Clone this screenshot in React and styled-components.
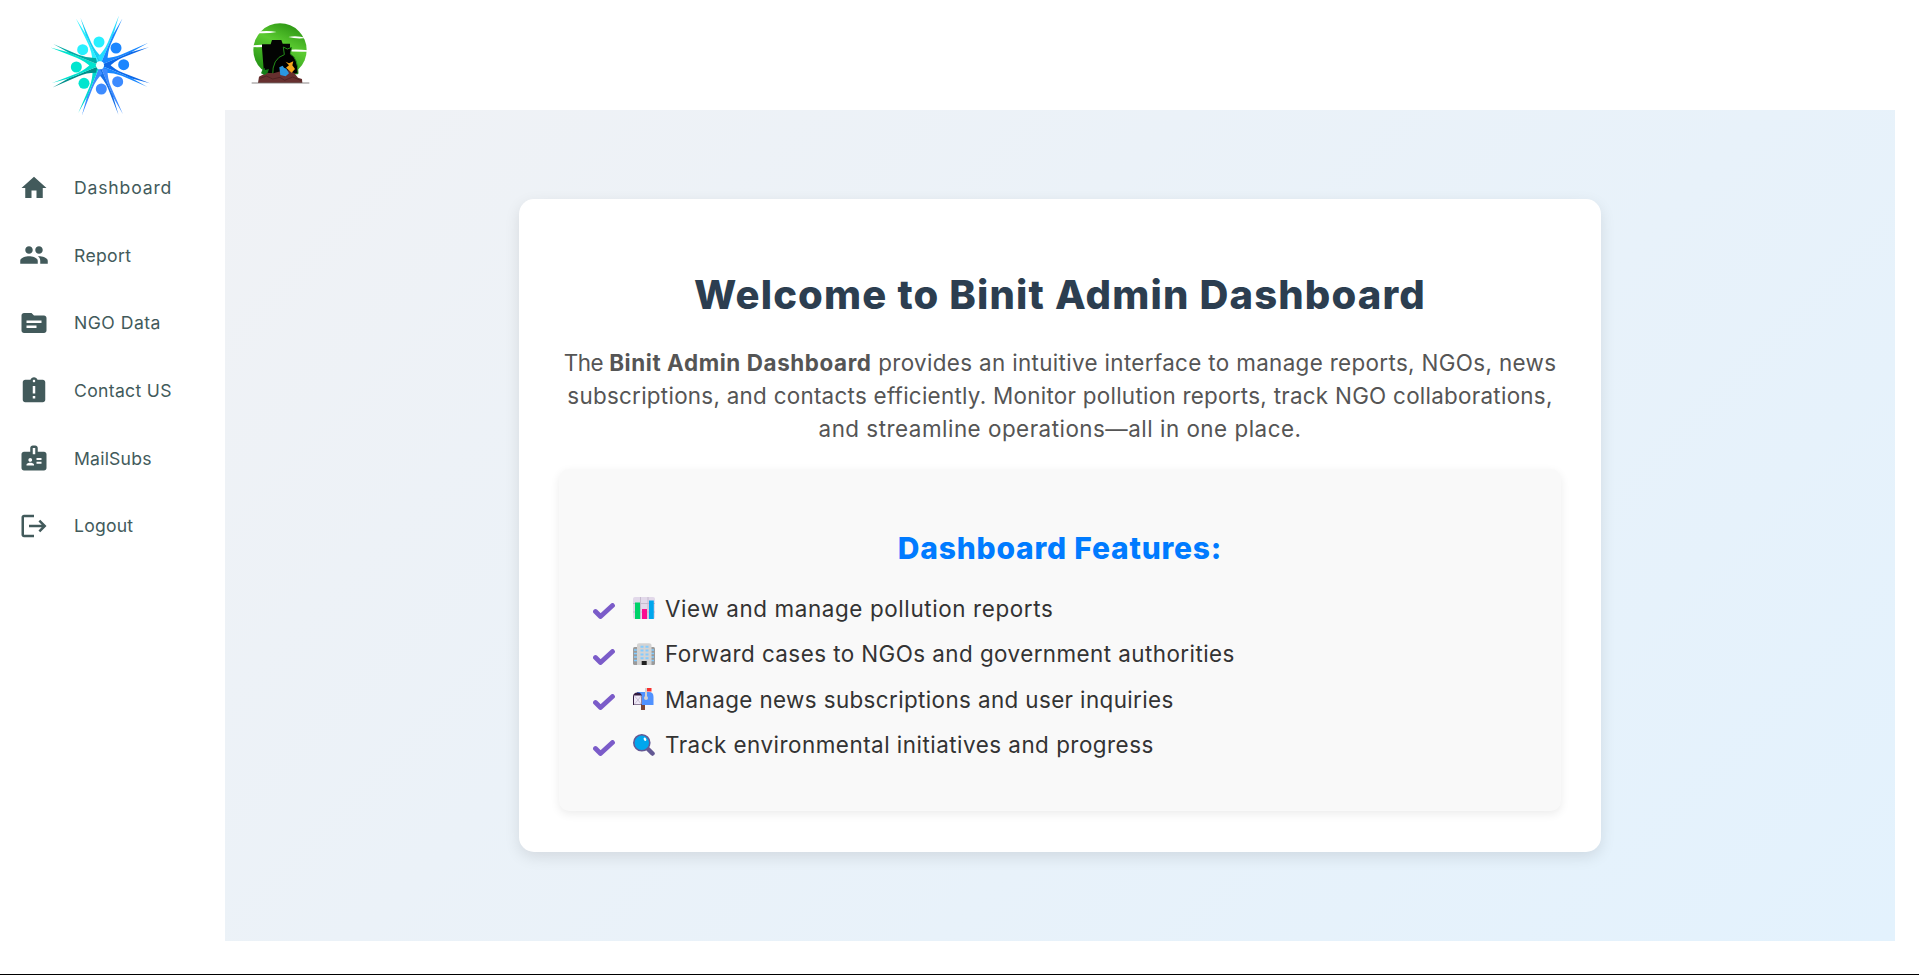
import React from 'react';
import styled, { createGlobalStyle } from 'styled-components';
import { MdHome, MdPeople, MdTopic, MdAssignmentLate, MdBadge, MdLogout } from 'react-icons/md';

const GlobalStyle = createGlobalStyle`
  * { box-sizing: border-box; }
  body {
    margin: 0;
    background: #fff;
    font-family: Inter, "Open Sans", sans-serif;
    overflow: hidden;
  }
`;

const Page = styled.div`
  display: flex;
  height: 975px;
  border-bottom: 1px solid #000;
`;

const Sidebar = styled.aside`
  width: 225px;
  flex: none;
`;

const SidebarLogo = styled.div`
  height: 154px;
  padding: 5px 40px;
`;

const NavItem = styled.a`
  display: flex;
  align-items: center;
  height: 67.6px;
  padding-left: 19px;
  gap: 25px;
  color: #425a5b;
  font-size: 17.6px;
  letter-spacing: ${(p) => p.$spacing}px;
  white-space: nowrap;

  svg { width: 30px; height: 30px; flex: none; }
`;

const Main = styled.main`
  width: 1670px;
  flex: none;
`;

const TopBar = styled.header`
  height: 110px;
  padding: 10px 15px;
`;

const Panel = styled.section`
  display: flex;
  justify-content: center;
  align-items: flex-start;
  height: 831px;
  padding-top: 89px;
  background: linear-gradient(135deg, #f0f2f5, #e3f2fd);
`;

const Card = styled.article`
  width: 1082px;
  height: 653px;
  padding: 26px 40px 0;
  background: #fff;
  border-radius: 15px;
  box-shadow: 0 5px 15px rgba(0, 0, 0, 0.1);
  text-align: center;
`;

const Title = styled.h1`
  margin: 40px 0 21.4px;
  font-size: 40px;
  font-weight: 800;
  line-height: 60px;
  letter-spacing: 1.16px;
  color: #2c3e50;
  white-space: nowrap;
`;

const Intro = styled.p`
  margin: 0 0 24.1px;
  font-size: 22.4px;
  line-height: 33px;
  color: #555;
`;

const Line = styled.span`
  display: block;
  white-space: nowrap;
`;

const Spaced = styled.span`
  letter-spacing: ${(p) => p.$spacing}px;
  font-weight: ${(p) => (p.$bold ? 700 : 400)};
`;

const Features = styled.div`
  height: 342px;
  padding: 56.5px 30px 0;
  background: #f9f9f9;
  border-radius: 10px;
  box-shadow: 0 3px 10px rgba(0, 0, 0, 0.08);
`;

const FeaturesTitle = styled.h2`
  margin: 0 0 20.4px;
  font-size: 30px;
  font-weight: 800;
  line-height: 45px;
  letter-spacing: 0.78px;
  color: #007bff;
`;

const FeatureList = styled.ul`
  display: flex;
  flex-direction: column;
  gap: 12px;
  margin: 0;
  padding: 0 0 0 4px;
  list-style: none;
`;

const Feature = styled.li`
  display: flex;
  align-items: center;
  height: 33.6px;
  font-size: 22.4px;
  color: #333;
  white-space: nowrap;
`;

const Check = styled.svg`
  width: 22px;
  height: 16px;
  margin: 6px 18px 0 0;
`;

const Emoji = styled.svg`
  width: 22px;
  height: 22px;
  margin-right: 10px;
`;

const Burst = styled.svg`
  display: block;
  width: 120px;
  height: 120px;
`;

const BirdMark = styled.svg`
  display: block;
  width: 80px;
  height: 85px;
`;

const ARMS = [
  [-25, 158, '#28f0ff', '#17cdf2'],
  [23, 160, '#22dcff', '#1787ff'],
  [67, 160, '#1787ff', '#0c68e8'],
  [112, 159, '#0c68e8', '#1787ff'],
  [157, 162, '#3d8bff', '#1670e8'],
  [202, 161, '#3b8cff', '#00d9d0'],
  [247, 157, '#008f8c', '#00e0cf'],
  [292, 158, '#00e5cf', '#00aaa5'],
];

const DOTS = [
  [177, 111, '#28f0ff'], [228, 129, '#1a86ff'], [251, 179, '#1a86ff'], [233, 230, '#3d8bff'],
  [184, 252, '#3d8bff'], [132, 235, '#00e5cf'], [109, 186, '#00e5cf'], [128, 134, '#28f0ff'],
];

function BurstLogo() {
  return (
    <Burst viewBox="0 0 360 360">
      {ARMS.map(([angle, len, left, right]) => (
        <g key={angle} transform={`translate(180 181) rotate(${angle})`}>
          <path d={`M0-8 L-16-20 Q-5-45-5-72 L-6-${len} L1-100 L0-80Z`} fill={left} />
          <path d={`M0-8 L16-20 Q5-45 5-72 L7-${len - 4} L0-100 L0-80Z`} fill={right} />
        </g>
      ))}
      {DOTS.map(([x, y, c]) => <circle key={`${x}-${y}`} cx={x} cy={y} r="16.5" fill={c} />)}
      <circle cx="180" cy="181" r="12" fill="#f4ffff" />
    </Burst>
  );
}

function BirdLogo() {
  return (
    <BirdMark viewBox="0 0 240 255">
      <defs>
        <linearGradient id="leaf" x1="0.75" y1="0" x2="0.3" y2="1">
          <stop offset="0" stopColor="#2a9212" />
          <stop offset="0.4" stopColor="#5bcb31" />
          <stop offset="1" stopColor="#1c8a10" />
        </linearGradient>
      </defs>
      <circle cx="120" cy="120" r="80" fill="url(#leaf)" />
      <path d="M52 66 Q78 60 110 66 Q82 71 52 69Z M36 107 Q62 101 96 107 Q65 113 36 111Z M145 81 Q170 76 200 84 Q170 88 145 81Z M130 121 Q165 116 205 121 L205 125 Q165 127 130 121Z" fill="#fff" />
      <path d="M66 114 V103 H92 L96 90 H124 L128 101 H150 V113 L146 190 H72Z" fill="#030403" />
      <path d="M98 198 Q96 145 133 134 L130 111 L142 117 L155 112 L151 132 Q174 144 174 191Z" fill="#000" stroke="#238d18" strokeWidth="3" />
      <path d="M54 219 L57 200 L79 188 L100 190 L122 184 L147 181 L163 190 L174 203 L186 207 L187 219Z" fill="#67302f" />
      <path d="M61 205 L79 198 L98 207 L120 202 L134 211 L158 201 L184 212" fill="none" stroke="#441c1c" strokeWidth="2" />
      <path d="M63 190 L67 180 L74 173 L75 180 L87 177 L83 188 L74 195Z" fill="#157e18" />
      <path d="M137 155 L147 160 L160 154 L157 166 L165 177 L155 188 L138 173 L147 166Z" fill="#f6a51c" />
      <path d="M118 172 L128 167 L132 173 L139 176 L147 190 L137 199 L121 195Z" fill="#2a97e0" />
      <path d="M35 219 H208" stroke="#74706f" strokeWidth="2.5" />
    </BirdMark>
  );
}

const EMOJI = {
  chart: (
    <>
      <rect width="22" height="22" rx="2" fill="#e2d9ea" />
      <path d="M0 6.5H22M0 15H22M7.5 0V22M15 0V22" stroke="#c6bace" strokeWidth="1" />
      <rect x="2" y="5.5" width="5" height="16.5" fill="#00d26a" />
      <rect x="9" y="12" width="5" height="10" fill="#fc0b91" />
      <rect x="16" y="3.5" width="4.8" height="18.5" fill="#00a6ed" />
    </>
  ),
  building: (
    <>
      <rect x="0" y="4" width="22" height="18" rx="1.5" fill="#9b9b9b" />
      <path d="M1 7H4M1 10.5H4M1 14H4M1 17.5H4M18 7H21M18 10.5H21M18 14H21M18 17.5H21" stroke="#83cbff" strokeWidth="1.7" />
      <path d="M4 22V2Q4 .2 6 .2H16Q18.500 .2 18.500 2V22Z" fill="#d3d3d3" />
      <path d="M7.500 3.700H15.500M7.500 7.500H15.500M7.500 11.500H15.500M7.500 15.300H15.500" stroke="#83cbff" strokeWidth="2" strokeDasharray="3 2" />
      <rect x="8.700" y="18" width="5" height="4" fill="#212121" />
    </>
  ),
  mail: (
    <>
      <rect x="8" y="15" width="4" height="7" rx=".5" fill="#7d4533" />
      <path d="M4 4H16Q20.500 4 20.500 9V17H4Z" fill="#5092ff" />
      <path d="M0 17V9Q0 4.500 4.500 4.500T9 9V17Z" fill="#321b41" />
      <path d="M1 7.500H8.500V16.500H1Z" fill="#efe9f8" />
      <path d="M1.500 8L5 12L8 8M1.500 16L5 12L8 16" fill="none" stroke="#cdc4d6" />
      <path d="M13 10V0" stroke="#d3d3d3" strokeWidth="2" />
      <circle cx="13" cy="10" r="2" fill="#d3d3d3" />
      <rect x="14" y="0" width="4.500" height="3.500" fill="#f8312f" />
    </>
  ),
  search: (
    <>
      <path d="M14 14L19.500 19.500" stroke="#635994" strokeWidth="4.500" strokeLinecap="round" />
      <circle cx="8.800" cy="8.800" r="8" fill="#00a6ed" stroke="#635994" strokeWidth="1.600" />
      <ellipse cx="12" cy="5.300" rx="1.200" ry="1.800" transform="rotate(-30 12 5.300)" fill="#fff" />
    </>
  ),
};

const NAV = [
  [MdHome, 'Dashboard', 0.82],
  [MdPeople, 'Report', 0.34],
  [MdTopic, 'NGO Data', 0.48],
  [MdAssignmentLate, 'Contact US', 0.31],
  [MdBadge, 'MailSubs', 0.2],
  [MdLogout, 'Logout', 0.2],
];

const FEATURES = [
  ['chart', 'View and manage pollution reports', 0.62],
  ['building', 'Forward cases to NGOs and government authorities', 0.445],
  ['mail', 'Manage news subscriptions and user inquiries', 0.39],
  ['search', 'Track environmental initiatives and progress', 0.5],
];

export default function App() {
  return (
    <>
      <GlobalStyle />
      <Page>
        <Sidebar>
          <SidebarLogo><BurstLogo /></SidebarLogo>
          <nav>
            {NAV.map(([Icon, label, spacing]) => (
              <NavItem key={label} $spacing={spacing}><Icon />{label}</NavItem>
            ))}
          </nav>
        </Sidebar>
        <Main>
          <TopBar><BirdLogo /></TopBar>
          <Panel>
            <Card>
              <Title>Welcome to Binit Admin Dashboard</Title>
              <Intro>
                <Line>
                  <Spaced $spacing={-0.4}>The </Spaced>
                  <Spaced as="strong" $bold $spacing={0.6}>Binit Admin Dashboard</Spaced>
                  <Spaced $spacing={0.35}> provides an intuitive interface to manage reports, NGOs, news</Spaced>
                </Line>
                <Line>
                  <Spaced $spacing={0.275}>subscriptions, and contacts efficiently. Monitor pollution reports, track NGO collaborations,</Spaced>
                </Line>
                <Line>
                  <Spaced $spacing={0.5}>and streamline operations—all in one place.</Spaced>
                </Line>
              </Intro>
              <Features>
                <FeaturesTitle>Dashboard Features:</FeaturesTitle>
                <FeatureList>
                  {FEATURES.map(([icon, label, spacing]) => (
                    <Feature key={icon}>
                      <Check viewBox="0 0 22 16">
                        <path d="M2.500 8.500L7.500 13.500L19.500 2.500" fill="none" stroke="#7b5cc9" strokeWidth="4.800" strokeLinecap="round" strokeLinejoin="round" />
                      </Check>
                      <Emoji viewBox="0 0 22 22">{EMOJI[icon]}</Emoji>
                      <Spaced $spacing={spacing}>{label}</Spaced>
                    </Feature>
                  ))}
                </FeatureList>
              </Features>
            </Card>
          </Panel>
        </Main>
      </Page>
    </>
  );
}
